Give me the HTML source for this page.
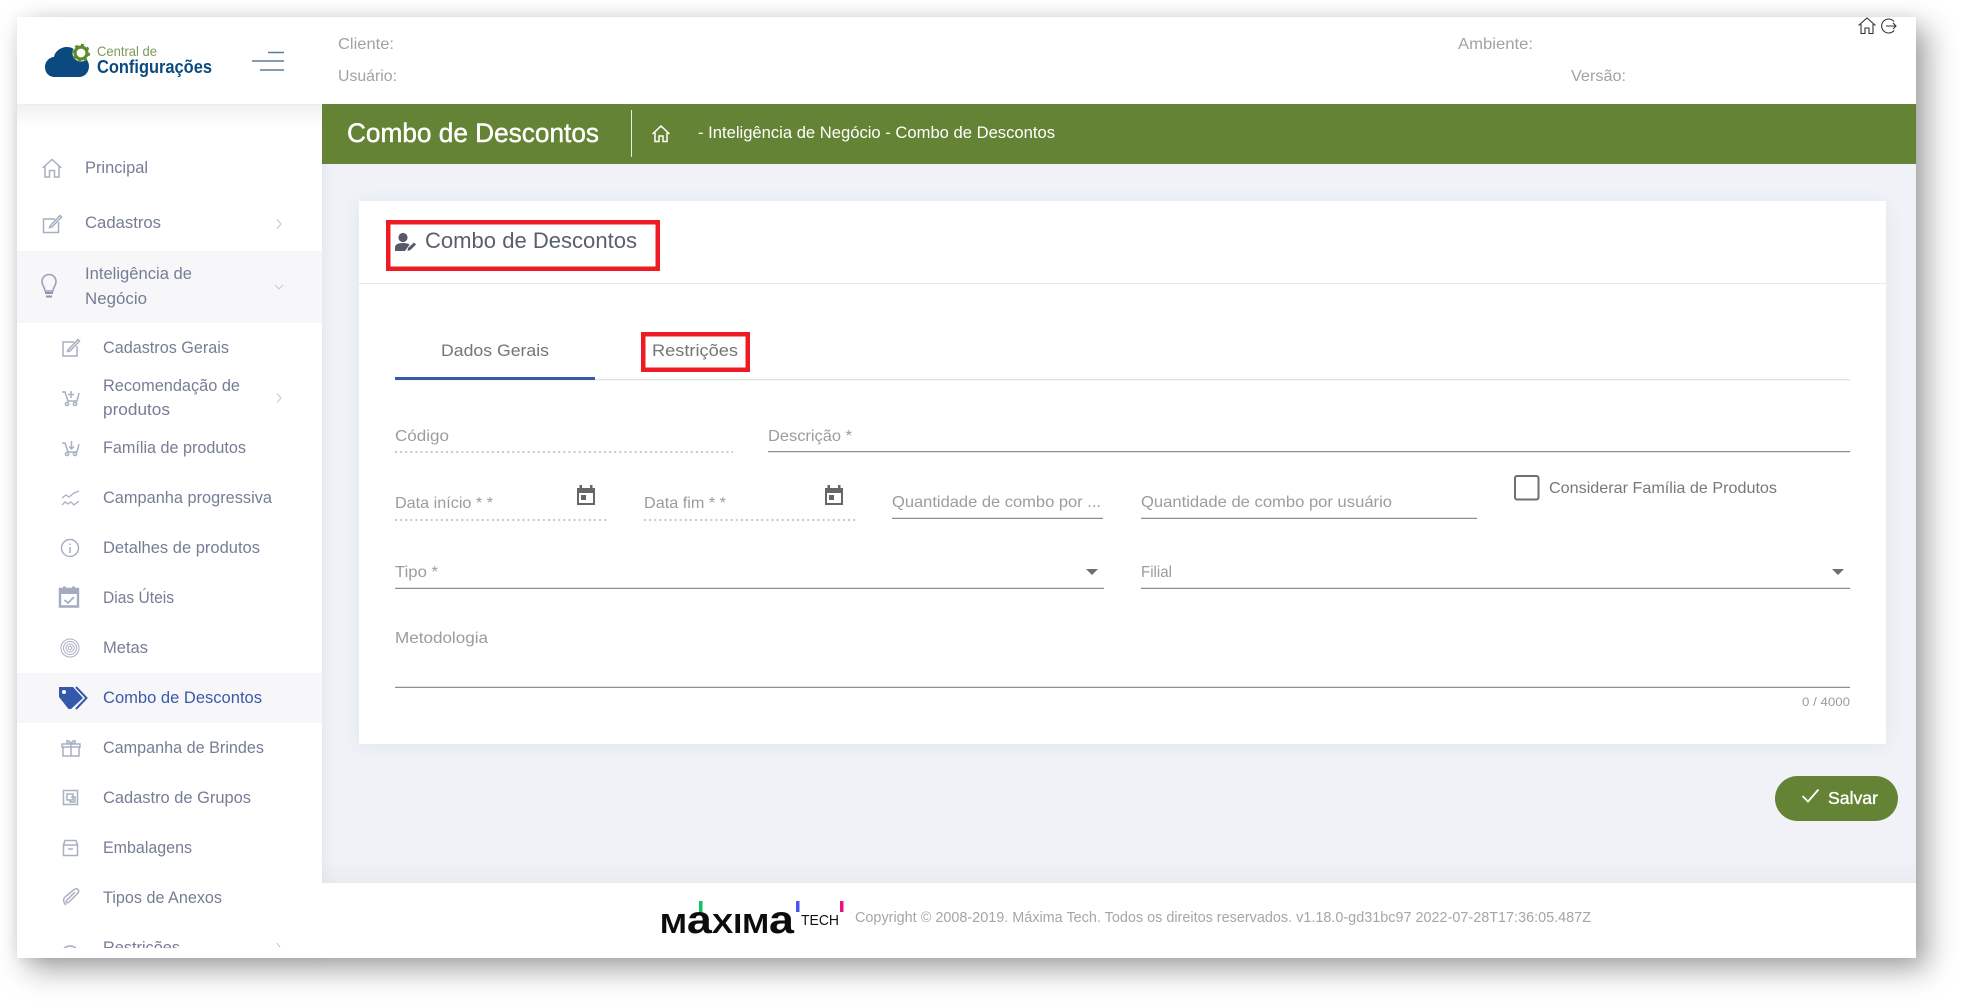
<!DOCTYPE html>
<html lang="pt">
<head>
<meta charset="utf-8">
<title>Combo de Descontos</title>
<style>
html,body{margin:0;padding:0;width:1964px;height:1006px;overflow:hidden;background:#fff}
.a{position:absolute}
svg{position:absolute;left:0;top:0}
text{font-family:"Liberation Sans",sans-serif;white-space:pre}
</style>
</head>
<body>
<div class="a" style="left:17px;top:17px;width:1899px;height:941px;background:#f0f2f8;box-shadow:11px 11px 28px rgba(0,0,0,.37),0 0 14px rgba(0,0,0,.05)"></div>
<div class="a" style="left:322px;top:860px;width:1594px;height:23px;background:linear-gradient(#f0f2f8,#e9ebf1)"></div>
<div class="a" style="left:359px;top:201px;width:1527px;height:543px;background:#fff;box-shadow:0 2px 18px rgba(60,70,110,.07)"></div>
<div class="a" style="left:17px;top:105px;width:305px;height:853px;background:#fff;box-shadow:3px 0 12px rgba(60,70,110,.06)"></div>
<div class="a" style="left:17px;top:105px;width:305px;height:22px;background:linear-gradient(#f1f1f3,#fff)"></div>
<div class="a" style="left:17px;top:251px;width:305px;height:72px;background:#f7f7fa"></div>
<div class="a" style="left:17px;top:673px;width:305px;height:50px;background:#f7f7fa"></div>
<div class="a" style="left:322px;top:883px;width:1594px;height:75px;background:#fff"></div>
<div class="a" style="left:17px;top:17px;width:1899px;height:87px;background:#fff"></div>
<div class="a" style="left:322px;top:104px;width:1594px;height:60px;background:#648334"></div>

<svg width="1964" height="1006" viewBox="0 0 1964 1006" xmlns="http://www.w3.org/2000/svg">
  <!-- logo -->
  <path d="M55 77C48 77 45 72 45 67C45 61 50 57 54 57C55 51 61 47 67 47C72 47 77 50 79 55C85 56 89 61 89 66C89 72 85 77 79 77Z" fill="#0b4a80"/>
  <circle cx="81" cy="53" r="8.5" fill="#fff"/>
  <circle cx="81" cy="53" r="6" fill="none" stroke="#5f8a2e" stroke-width="3.2"/>
  <circle cx="81" cy="53" r="8.2" fill="none" stroke="#5f8a2e" stroke-width="2" stroke-dasharray="3 3.4"/>
  <text x="97" y="56" font-size="14" fill="#7a9a58" textLength="60" lengthAdjust="spacingAndGlyphs">Central de</text>
  <text x="97" y="73" font-size="18.5" font-weight="700" fill="#0b4a80" textLength="115" lengthAdjust="spacingAndGlyphs">Configurações</text>
  <g stroke="#5d7b98" stroke-width="1.4">
    <path d="M268 52.5H284M252 61H284M260 70H284"/>
  </g>

  <!-- header -->
  <g font-size="16" fill="#a2a2a2">
    <text x="338" y="49" textLength="56" lengthAdjust="spacingAndGlyphs">Cliente:</text>
    <text x="338" y="81" textLength="59" lengthAdjust="spacingAndGlyphs">Usuário:</text>
    <text x="1458" y="49" textLength="75" lengthAdjust="spacingAndGlyphs">Ambiente:</text>
    <text x="1571" y="81" textLength="55" lengthAdjust="spacingAndGlyphs">Versão:</text>
  </g>
  <g fill="none" stroke="#333" stroke-width="1.1">
    <path d="M858.5 25.5L867 18L875.5 25.5M861 24V33.5H865V28H869V33.5H873V24" transform="translate(1000 0)"/>
    <path d="M1894 21.5A7 7 0 1 0 1894 30.5M1886 26H1896M1893 23L1896 26L1893 29"/>
  </g>

  <!-- green bar -->
  <text x="347" y="142" font-size="27" fill="#fff" stroke="#fff" stroke-width=".45" textLength="252" lengthAdjust="spacingAndGlyphs">Combo de Descontos</text>
  <rect x="631" y="110" width="1" height="47" fill="#e8eedd"/>
  <path d="M652.5 134L661 126L669.5 134M655 132.5V141.5H659V136H663V141.5H667V132.5" fill="none" stroke="#fff" stroke-width="1.5"/>
  <text x="698" y="138" font-size="16.5" fill="#fff" textLength="357" lengthAdjust="spacingAndGlyphs">- Inteligência de Negócio - Combo de Descontos</text>

  <!-- sidebar text -->
  <g font-size="16.5" fill="#767d96">
    <text x="85" y="173" textLength="63" lengthAdjust="spacingAndGlyphs">Principal</text>
    <text x="85" y="228" textLength="76" lengthAdjust="spacingAndGlyphs">Cadastros</text>
    <text x="85" y="279" textLength="107" lengthAdjust="spacingAndGlyphs">Inteligência de</text>
    <text x="85" y="304" textLength="62" lengthAdjust="spacingAndGlyphs">Negócio</text>
    <text x="103" y="353" textLength="126" lengthAdjust="spacingAndGlyphs">Cadastros Gerais</text>
    <text x="103" y="391" textLength="137" lengthAdjust="spacingAndGlyphs">Recomendação de</text>
    <text x="103" y="415" textLength="67" lengthAdjust="spacingAndGlyphs">produtos</text>
    <text x="103" y="453" textLength="143" lengthAdjust="spacingAndGlyphs">Família de produtos</text>
    <text x="103" y="503" textLength="169" lengthAdjust="spacingAndGlyphs">Campanha progressiva</text>
    <text x="103" y="553" textLength="157" lengthAdjust="spacingAndGlyphs">Detalhes de produtos</text>
    <text x="103" y="603" textLength="71" lengthAdjust="spacingAndGlyphs">Dias Úteis</text>
    <text x="103" y="653" textLength="45" lengthAdjust="spacingAndGlyphs">Metas</text>
    <text x="103" y="703" fill="#3a5aa8" textLength="159" lengthAdjust="spacingAndGlyphs">Combo de Descontos</text>
    <text x="103" y="753" textLength="161" lengthAdjust="spacingAndGlyphs">Campanha de Brindes</text>
    <text x="103" y="803" textLength="148" lengthAdjust="spacingAndGlyphs">Cadastro de Grupos</text>
    <text x="103" y="853" textLength="89" lengthAdjust="spacingAndGlyphs">Embalagens</text>
    <text x="103" y="903" textLength="119" lengthAdjust="spacingAndGlyphs">Tipos de Anexos</text>
    <text x="103" y="953" textLength="77" lengthAdjust="spacingAndGlyphs" clip-path="url(#c1)">Restrições</text>
  </g>
  <defs><clipPath id="c1"><rect x="17" y="930" width="305" height="18"/></clipPath></defs>

  <!-- sidebar icons -->
  <g fill="none" stroke="#a9afc4" stroke-width="1.5">
    <path d="M42.5 168L52 159.5L61.5 168M45 166V177H49.5V170.5H54.5V177H59V166"/>
    <path d="M55 219H43.5V232.5H58.5V222M50 226L60 215.5L61.5 217L52 227L49.5 227.5Z"/>
    <path d="M45 291C45 287.5 42 285.5 42 281.5A7 7 0 0 1 56 281.5C56 285.5 53 287.5 53 291Z" stroke="#9aa1b8" stroke-width="1.6"/>
    <path d="M45 293H53" stroke="#8d94ac" stroke-width="2"/>
    <path d="M46 296.5H52" stroke="#8d94ac" stroke-width="2"/>
    <path d="M74 342H63V356H77V346M68 350L78 339.5L79.5 341L70 351L67.5 351.5Z"/>
    <path d="M62 392H65L68 401H77L79 393M71 391V398M68 394.5H74"/>
    <circle cx="67" cy="404" r="1.6"/><circle cx="75" cy="404" r="1.6"/>
    <path d="M62 443H65L68 452H77L79 444M71.5 441V449M69 446.5L71.5 449L74 446.5"/>
    <circle cx="67" cy="454" r="1.6"/><circle cx="75" cy="454" r="1.6"/>
    <path d="M62 498L66 495L69 497L74 493L79 491M62 505L65 502L68 504L71 502L74 505L79 501" stroke-width="1.3"/>
    <circle cx="70" cy="548" r="8.5"/>
    <path d="M70 547V553M70 543.5V545"/>
    <circle cx="70" cy="648" r="9" stroke-width="1"/><circle cx="70" cy="648" r="6.5" stroke-width="1"/><circle cx="70" cy="648" r="4" stroke-width="1"/><circle cx="70" cy="648" r="1.8" stroke-width="1"/>
    <path d="M63 747H79V756H63ZM62 744H80V747H62ZM71 744V756M71 744C68 744 66 742 67 741S70 741 71 744C72 741 74 740 75 741S74 744 71 744"/>
    <path d="M63.5 790.5H77.5V804.5H63.5ZM67 794H73V800H67ZM71 797H75V802H70V800"/>
    <path d="M63.5 845H77.5V855.5H63.5ZM65 840.5H76L77.5 845H63.5ZM68 849H73"/>
    <path d="M66 905C63 902 63 899 65 897L74 889.5C77 887.5 80 890 78 893L69 902C67 904 65 902 67 900L75 892" stroke-width="1.5"/>
    <g clip-path="url(#c1)"><circle cx="70" cy="955" r="9"/><path d="M64 949L76 961"/></g>
    <g stroke="#c5c9d6" stroke-width="1.1">
      <path d="M277 219.5L281 224L277 228.5"/>
      <path d="M275 285L279 289L283 285"/>
      <path d="M277 393.5L281 398L277 402.5"/>
      <path d="M277 943L280 947" clip-path="url(#c1)"/>
    </g>
  </g>
  <path d="M60 589H78V606.5H60Z" fill="none" stroke="#a4aac0" stroke-width="2.4"/>
  <path d="M59 589H79V594H59ZM63 586.5H66V590H63ZM72 586.5H75V590H72Z" fill="#a4aac0"/>
  <path d="M64.5 600L68 603L74 597" fill="none" stroke="#a4aac0" stroke-width="1.7"/>
  <path d="M59 687H73L83 698L71 709H68.5L59 697Z" fill="#3558aa"/>
  <circle cx="64" cy="692" r="2" fill="#fff"/>
  <path d="M76 687L86.5 698L76 709" fill="none" stroke="#3558aa" stroke-width="2"/>

  <!-- card -->
  <rect x="359" y="283" width="1527" height="1" fill="#e8e8ea"/>
  <circle cx="403" cy="237.5" r="4.6" fill="#555b66"/>
  <path d="M395 251V247.5C395 244.5 398 243 403 243C406 243 408 243.6 409.6 244.6L405 251Z" fill="#555b66"/>
  <path d="M407.5 251L408 248L414 242.5L416 244.5L410.5 250Z" fill="#555b66"/>
  <text x="425" y="248" font-size="22.5" fill="#5a606b" textLength="212" lengthAdjust="spacingAndGlyphs">Combo de Descontos</text>

  <rect x="395" y="379" width="1455" height="1.3" fill="#e2e2e2"/>
  <rect x="395" y="377" width="200" height="3" fill="#3858a8"/>
  <text x="441" y="356" font-size="17" fill="#757575" textLength="108" lengthAdjust="spacingAndGlyphs">Dados Gerais</text>
  <text x="652" y="356" font-size="17" fill="#757575" textLength="86" lengthAdjust="spacingAndGlyphs">Restrições</text>

  <g fill="none" stroke="#ed1c24" stroke-width="4.5">
    <rect x="388.25" y="222.25" width="269.5" height="46.5"/>
    <rect x="643.25" y="334.25" width="104.5" height="35.5"/>
  </g>

  <g font-size="16" fill="#9c9c9c">
    <text x="395" y="441" textLength="54" lengthAdjust="spacingAndGlyphs">Código</text>
    <text x="768" y="441" textLength="84" lengthAdjust="spacingAndGlyphs">Descrição *</text>
    <text x="395" y="508" textLength="98" lengthAdjust="spacingAndGlyphs">Data início * *</text>
    <text x="644" y="508" textLength="82" lengthAdjust="spacingAndGlyphs">Data fim * *</text>
    <text x="892" y="507" textLength="209" lengthAdjust="spacingAndGlyphs">Quantidade de combo por ...</text>
    <text x="1141" y="507" textLength="251" lengthAdjust="spacingAndGlyphs">Quantidade de combo por usuário</text>
    <text x="395" y="577" textLength="43" lengthAdjust="spacingAndGlyphs">Tipo *</text>
    <text x="1141" y="577" textLength="31" lengthAdjust="spacingAndGlyphs">Filial</text>
    <text x="395" y="643" textLength="93" lengthAdjust="spacingAndGlyphs">Metodologia</text>
    <text x="1549" y="493" fill="#787878" textLength="228" lengthAdjust="spacingAndGlyphs">Considerar Família de Produtos</text>
    <text x="1802" y="706" font-size="11.5" textLength="48" lengthAdjust="spacingAndGlyphs">0 / 4000</text>
  </g>

  <g stroke="#8f8f8f" stroke-width="1.2" fill="none">
    <path d="M395 452H733" stroke="#a8a8a8" stroke-dasharray="2 3.1"/>
    <path d="M768 451.6H1850"/>
    <path d="M395 520H608" stroke="#a8a8a8" stroke-dasharray="2 3.1"/>
    <path d="M644 520H857" stroke="#a8a8a8" stroke-dasharray="2 3.1"/>
    <path d="M892 518.4H1103"/>
    <path d="M1141 518.4H1477"/>
    <path d="M395 588.4H1104"/>
    <path d="M1141 588.4H1850"/>
    <path d="M395 687.4H1850"/>
  </g>
  <rect x="1515" y="476" width="23.5" height="23.5" rx="2" fill="none" stroke="#6f6f6f" stroke-width="2"/>
  <path d="M1086 569H1098L1092 575Z M1832 569H1844L1838 575Z" fill="#6f6f6f"/>
  <g fill="#666">
    <path d="M579.5 485H582V488H590V485H592.5V488H595V505H577V488H579.5ZM579 493V503H593V493ZM581 495H586V500H581Z" fill-rule="evenodd"/>
    <path d="M827.5 485H830V488H838V485H840.5V488H843V505H825V488H827.5ZM827 493V503H841V493ZM829 495H834V500H829Z" fill-rule="evenodd"/>
  </g>

  <!-- save -->
  <rect x="1775" y="776" width="123" height="45" rx="22.5" fill="#648334"/>
  <path d="M1802.5 796L1808 801.5L1818.5 789.5" fill="none" stroke="#fff" stroke-width="1.8"/>
  <text x="1828" y="804" font-size="17.5" fill="#fff" stroke="#fff" stroke-width=".35" textLength="50" lengthAdjust="spacingAndGlyphs">Salvar</text>

  <!-- footer -->
  <text x="660" y="933" font-weight="700" fill="#0c0c0c" font-size="28" textLength="134" lengthAdjust="spacingAndGlyphs">M<tspan font-size="39">a</tspan>XIM<tspan font-size="39">a</tspan></text>
  <rect x="699" y="901" width="3.5" height="11" fill="#12c45f"/>
  <rect x="796" y="901" width="3.5" height="11" fill="#4a55ee"/>
  <rect x="840" y="901" width="3.5" height="11" fill="#ee0f80"/>
  <text x="801" y="925" font-size="14.5" fill="#111" textLength="38" lengthAdjust="spacingAndGlyphs">TECH</text>
  <text x="855" y="922" font-size="15" fill="#a6a6a6" textLength="736" lengthAdjust="spacingAndGlyphs">Copyright © 2008-2019. Máxima Tech. Todos os direitos reservados. v1.18.0-gd31bc97 2022-07-28T17:36:05.487Z</text>
</svg>
</body>
</html>
